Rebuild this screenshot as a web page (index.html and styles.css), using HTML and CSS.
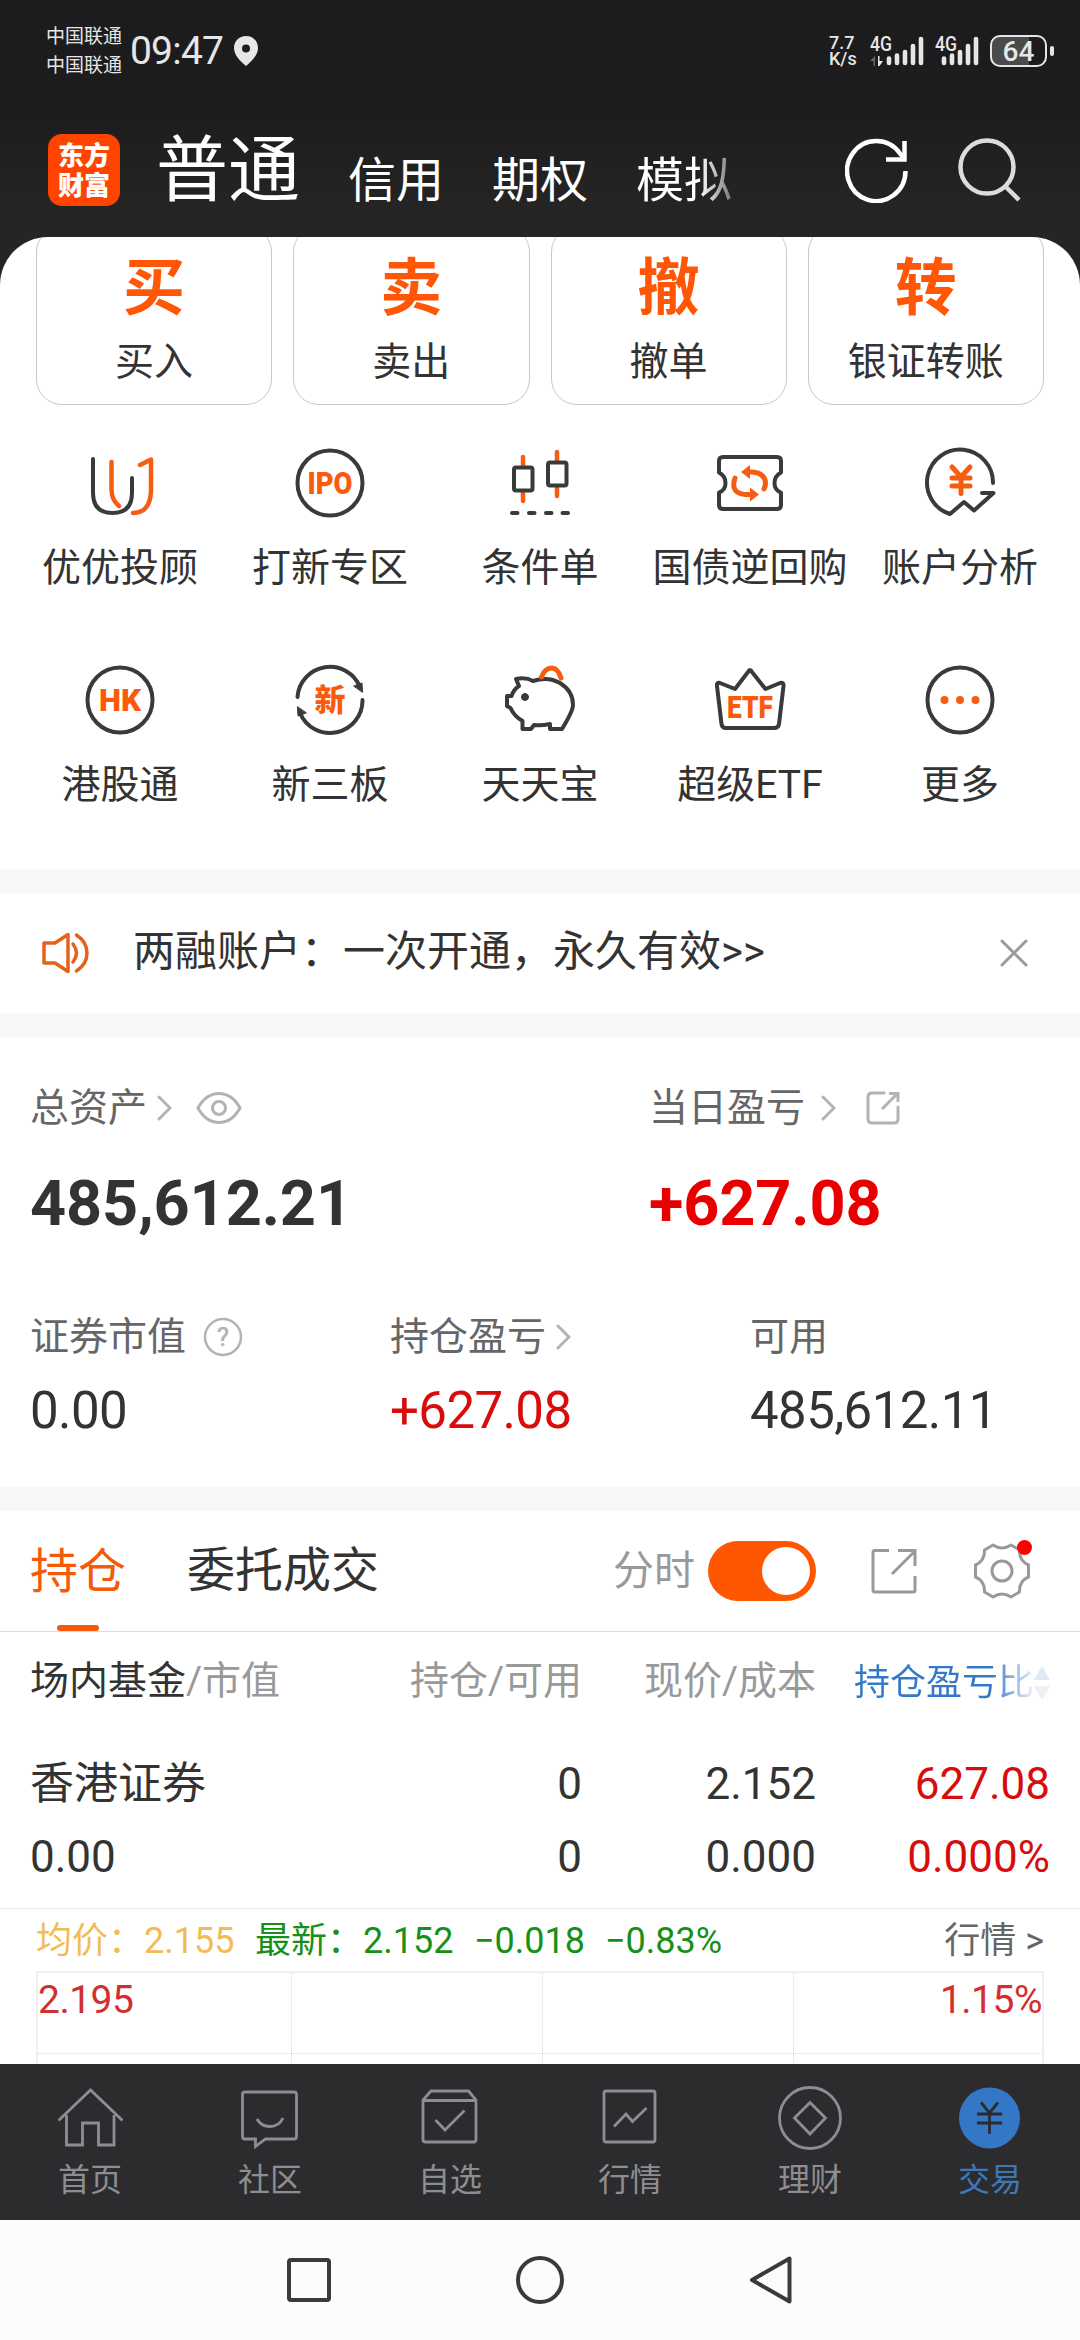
FILE: index.html
```html
<!DOCTYPE html>
<html lang="zh-CN">
<head>
  <meta charset="utf-8">
  <title>交易</title>
  <link rel="stylesheet" href="styles.css">
</head>
<body>
  <header class="header">
    <div class="status-bar">
      <div class="carriers">
        <span>中国联通</span>
        <span>中国联通</span>
      </div>
      <span class="time">09:47</span>
      <svg class="location" width="24" height="30" viewBox="0 0 24 30"><path fill="#e6e6e6" fill-rule="evenodd" d="M12 0C5 0 0 5 0 12C0 19 6 25 12 30C18 25 24 19 24 12C24 5 19 0 12 0ZM12 8.500A4 4 0 1 1 12 16.500A4 4 0 1 1 12 8.500Z"/></svg>
      <div class="net-speed">
        <span>7.7</span>
        <span>K/s</span>
      </div>
      <svg class="signal" width="54" height="46" viewBox="0 -8 54 46">
        <text class="signal-text" x="0" y="15" textLength="22" lengthAdjust="spacingAndGlyphs">4G</text>
        <path d="M0 25L5 20V30H3.500V25Z" fill="#666"/>
        <path d="M8 20V30H9.500L13 25H9.500V20Z" fill="#e6e6e6"/>
        <path class="bars" d="M19 22.500V27M27 19.500V27M35 16V27M43 10V27M51 3V27"/>
      </svg>
      <svg class="signal" width="46" height="46" viewBox="0 -8 46 46">
        <text class="signal-text" x="0" y="15" textLength="22" lengthAdjust="spacingAndGlyphs">4G</text>
        <path class="bars" d="M9 22.500V27M17 19.500V27M25 16V27M33 10V27M41 3V27"/>
      </svg>
      <div class="battery"><span>64</span></div>
      <i class="battery-tip"></i>
    </div>
    <div class="top-bar">
      <div class="logo"><span>东方</span><span>财富</span></div>
      <nav class="top-tabs">
        <span class="top-tab active">普通</span>
        <span class="top-tab">信用</span>
        <span class="top-tab">期权</span>
        <span class="top-tab fade">模拟</span>
      </nav>
      <svg width="64" height="66" viewBox="0 0 64 66" fill="none" stroke="#fff" stroke-width="4.500">
        <path d="M60.500 34A29.200 30 0 1 1 55 16.500L60 22"/>
        <path d="M41 22.500H59.500V4"/>
      </svg>
      <svg class="search" width="64" height="66" viewBox="0 0 64 66" fill="none" stroke="#dcdcdc" stroke-width="4.500">
        <circle cx="29" cy="30" r="26.500"/>
        <path d="M47 49L61 63"/>
      </svg>
    </div>
  </header>

  <main class="sheet">
    <section class="cards">
      <div class="card"><b>买</b><span>买入</span></div>
      <div class="card"><b>卖</b><span>卖出</span></div>
      <div class="card"><b>撤</b><span>撤单</span></div>
      <div class="card"><b>转</b><span>银证转账</span></div>
    </section>

    <section class="menu">
      <div class="menu-item">
        <svg class="icon" viewBox="0 0 72 72">
          <path d="M9 12V46Q9 66 28.500 66T48 46V31"/>
          <path class="orange" d="M27.500 15V42Q27.500 53 35 59M56 18L67 12.500V44Q66 66 49 66"/>
        </svg>
        <span>优优投顾</span>
      </div>
      <div class="menu-item">
        <svg class="icon" viewBox="0 0 72 72">
          <circle cx="36" cy="36" r="32.500"/>
          <text x="36" y="47" textLength="45" lengthAdjust="spacingAndGlyphs">IPO</text>
        </svg>
        <span>打新专区</span>
      </div>
      <div class="menu-item">
        <svg class="icon" viewBox="0 0 72 72">
          <path class="orange" d="M19 10V19M19 45V54M53 5V14M53 41V49"/>
          <rect x="10" y="20.500" width="18.500" height="23" rx="2"/>
          <rect x="44" y="15.500" width="18.500" height="23" rx="2"/>
          <path d="M8 66H13.500M25 66H30.500M42 66H47.500M58.500 66H64"/>
        </svg>
        <span>条件单</span>
      </div>
      <div class="menu-item">
        <svg class="icon" viewBox="0 0 72 72">
          <path d="M9 10H63Q67 10 67 14V25.500Q60.500 29 60.500 36T67 45.500V58Q67 62 63 62H9Q5 62 5 58V45.500Q11.500 43 11.500 36T5 25.500V14Q5 10 9 10Z"/>
          <path class="orange thick" d="M33 25H38Q51 26 51.500 36Q51.500 39 50 42M21 31Q16 46 31 47.500H38"/>
          <path class="orange-fill" d="M27 25L36 18V32ZM45 47.500L36 40.500V54.500Z"/>
        </svg>
        <span>国债逆回购</span>
      </div>
      <div class="menu-item">
        <svg class="icon" viewBox="0 0 72 72">
          <path d="M69 36A33 33 0 1 0 26 67L40 55L50 63.500L69.500 46H58"/>
          <path class="orange thick" d="M28 20L37 30L46 20M37 30V46.500M28 31H46M28 39H46"/>
        </svg>
        <span>账户分析</span>
      </div>
      <div class="menu-item">
        <svg class="icon" viewBox="0 0 72 72">
          <circle cx="36" cy="36" r="32.500"/>
          <text x="36" y="47" textLength="42" lengthAdjust="spacingAndGlyphs">HK</text>
        </svg>
        <span>港股通</span>
      </div>
      <div class="menu-item">
        <svg class="icon" viewBox="0 0 72 72">
          <path d="M3.500 33A32.500 32.500 0 0 1 66 23M68.500 36A32.500 32.500 0 0 1 6 49"/>
          <path class="dark-fill" d="M60 22L68 19L68.500 28ZM12 49L4 52L3.500 43Z"/>
          <text class="cjk" x="36" y="47">新</text>
        </svg>
        <span>新三板</span>
      </div>
      <div class="menu-item">
        <svg class="icon" viewBox="0 0 72 72">
          <path d="M12 15Q22 13 29 17Q44 12 56 19Q69 27 69 41Q69 47 58 65H46V60Q37 62 30 61L27 65H18.500V57Q10 52 6.500 44L3 42V32H7.500Q10 25 15 22Z"/>
          <path class="orange thick" d="M37.500 13Q41 4 47.500 4T57 14"/>
          <circle class="dark-fill" cx="21" cy="33" r="3.500"/>
        </svg>
        <span>天天宝</span>
      </div>
      <div class="menu-item">
        <svg class="icon" viewBox="0 0 72 72">
          <path d="M34 8Q36 4 38 8L51.500 25L66 19Q70 18 69.500 22L65 60Q64.500 64 60 64H12Q8 64 7.500 60L3 22Q2.500 18 6 19L21 25Z"/>
          <text x="36" y="53.500" textLength="46" lengthAdjust="spacingAndGlyphs">ETF</text>
        </svg>
        <span>超级ETF</span>
      </div>
      <div class="menu-item">
        <svg class="icon" viewBox="0 0 72 72">
          <circle cx="36" cy="36" r="32.500"/>
          <g class="orange-fill"><circle cx="20.500" cy="36" r="4"/><circle cx="36" cy="36" r="4"/><circle cx="51.500" cy="36" r="4"/></g>
        </svg>
        <span>更多</span>
      </div>
    </section>

    <section class="notice">
      <svg width="48" height="42" viewBox="0 0 48 42" fill="none" stroke="#e5621b" stroke-width="3.500" stroke-linejoin="round" stroke-linecap="round">
        <path d="M2 11H13L26 2.500V39.500L13 31H2Z"/>
        <path d="M31 12Q38 21 31 30M34.500 3Q45 10 45 21T34.500 39"/>
      </svg>
      <span class="notice-text">两融账户：一次开通，永久有效&gt;&gt;</span>
      <svg width="28" height="28" viewBox="0 0 28 28" stroke="#999" stroke-width="3" stroke-linecap="round"><path d="M2 2L26 26M26 2L2 26"/></svg>
    </section>

    <section class="assets">
      <div class="assets-main">
        <div>
          <div class="label">总资产
            <svg class="chevron near" viewBox="0 0 15 26"><path d="M2 2L13 13L2 24"/></svg>
            <svg class="eye" width="46" height="32" viewBox="0 0 46 32" fill="none" stroke="#b3b3b3" stroke-width="3"><path d="M2 16Q10 1.500 23 1.500T44 16Q36 30.500 23 30.500T2 16Z"/><circle cx="23" cy="16" r="6.500"/></svg>
          </div>
          <div class="total">485,612.21</div>
        </div>
        <div>
          <div class="label">当日盈亏
            <svg class="chevron far" viewBox="0 0 15 26"><path d="M2 2L13 13L2 24"/></svg>
            <svg class="share" width="34" height="34" viewBox="0 0 34 34" fill="none" stroke="#b3b3b3" stroke-width="3"><path d="M18 2H6Q2 2 2 6V28Q2 32 6 32H28Q32 32 32 28V16" stroke-linecap="round"/><path d="M16 18L31 3M23 2.500H32V11"/></svg>
          </div>
          <div class="total red">+627.08</div>
        </div>
      </div>
      <div class="assets-sub">
        <div>
          <div class="label">证券市值
            <svg class="help" width="40" height="40" viewBox="0 0 40 40"><circle cx="20" cy="20" r="18" fill="none" stroke="#b3b3b3" stroke-width="2.500"/><text x="20" y="29" text-anchor="middle" font-size="25" fill="#b3b3b3" stroke="#b3b3b3" stroke-width=".6">?</text></svg>
          </div>
          <div class="value">0.00</div>
        </div>
        <div>
          <div class="label">持仓盈亏
            <svg class="chevron near" viewBox="0 0 15 26"><path d="M2 2L13 13L2 24"/></svg>
          </div>
          <div class="value red">+627.08</div>
        </div>
        <div>
          <div class="label">可用</div>
          <div class="value">485,612.11</div>
        </div>
      </div>
    </section>

    <section class="position-tabs">
      <span class="position-tab active">持仓</span>
      <span class="position-tab">委托成交</span>
      <span class="switch-label">分时</span>
      <div class="switch"></div>
      <svg class="share-big" width="46" height="46" viewBox="0 0 46 46" fill="none" stroke="#999" stroke-width="3"><path d="M18 2.500H4Q2 2.500 2 4.500V42Q2 44 4 44H42Q44 44 44 42V28"/><path d="M21 26L43 4M27 2.500H44V18"/></svg>
      <div class="gear">
        <svg width="56" height="56" viewBox="0 0 56 56" fill="none" stroke="#999" stroke-width="3" stroke-linejoin="round"><path d="M19 2Q28 8 37 2L45.500 7Q45 18 54.500 22V34Q45 38 45.500 49L37 54Q28 48 19 54L10.500 49Q11 38 1.500 34V22Q11 18 10.500 7Z"/><circle cx="28" cy="28" r="10"/></svg>
        <i class="dot"></i>
      </div>
    </section>

    <section class="holdings">
      <div class="row head">
        <span><em>场内基金</em>/市值</span>
        <span>持仓/可用</span>
        <span>现价/成本</span>
        <span class="sort">持仓盈亏比
          <svg width="16" height="34" viewBox="0 0 16 34"><path fill="#e1eaf4" d="M8 0L16 14H0Z"/><path fill="#f0f0f0" d="M8 34L0 20H16Z"/></svg>
        </span>
      </div>
      <div class="row">
        <span>香港证券</span><span>0</span><span>2.152</span><span class="red">627.08</span>
      </div>
      <div class="row second">
        <span>0.00</span><span>0</span><span>0.000</span><span class="red">0.000%</span>
      </div>
    </section>

    <section class="quote">
      <div class="quote-line">
        <span class="avg">均价：</span><span class="avg num">2.155</span>
        <span class="last">最新：</span><span class="last num">2.152</span>
        <span class="last change">−0.018</span><span class="last change">−0.83%</span>
        <span class="more">行情 &gt;</span>
      </div>
      <div class="chart">
        <div class="chart-top">
          <span>2.195</span><i></i><i></i><span>1.15%</span>
        </div>
        <div class="chart-next"><i></i><i></i><i></i><i></i></div>
      </div>
    </section>
  </main>

  <nav class="tab-bar">
    <div class="tab">
      <svg viewBox="0 0 66 66"><path d="M1.500 35.500L33.500 5L65.500 35.500M9.500 30V60H25.500V38H41.500V60H57V30"/></svg>
      <span>首页</span>
    </div>
    <div class="tab">
      <svg viewBox="0 0 66 66"><path d="M8 7H57Q59.500 7 59.500 9.500V51.500Q59.500 54 57 54H28.500L18.500 61.500V54H8Q5.500 54 5.500 51.500V9.500Q5.500 7 8 7ZM20 34Q24 41.500 33 41.500T46 33"/></svg>
      <span>社区</span>
    </div>
    <div class="tab">
      <svg viewBox="0 0 66 66"><path d="M6 15L14 6H51.500L59 15V54.500Q59 57 56.500 57H8.500Q6 57 6 54.500ZM6 15.500H59M18.500 35L28 45L47.500 25.500"/></svg>
      <span>自选</span>
    </div>
    <div class="tab">
      <svg viewBox="0 0 66 66"><rect x="7" y="6" width="51" height="51" rx="2"/><path d="M17 41.500L29 29L35.500 36.500L49.500 23"/></svg>
      <span>行情</span>
    </div>
    <div class="tab">
      <svg viewBox="0 0 66 66"><circle cx="33" cy="33" r="30.500"/><path d="M33 17.500L48.500 33L33 49L17.500 33Z"/></svg>
      <span>理财</span>
    </div>
    <div class="tab active">
      <svg viewBox="0 0 66 66"><circle class="coin" cx="32.500" cy="33" r="30.500"/><path class="yen" d="M24 17.500L32.500 28L41 17.500M32.500 28V49M20 29H45M20 38H45"/></svg>
      <span>交易</span>
    </div>
  </nav>

  <footer class="system-nav">
    <svg width="48" height="48" viewBox="0 0 48 48"><rect x="4" y="4" width="40" height="40" rx="2"/></svg>
    <svg width="48" height="48" viewBox="0 0 48 48"><circle cx="24" cy="24" r="22"/></svg>
    <svg width="48" height="48" viewBox="0 0 48 48"><path d="M42.500 2.500V45.500L5 24Z"/></svg>
  </footer>
</body>
</html>
```

FILE: styles.css
```css
* {
  box-sizing: border-box;
}
body {
  margin: 0;
  width: 1080px;
  height: 2340px;
  overflow: hidden;
  display: flex;
  flex-direction: column;
  background-color: #252525;
  color: #333;
  font-family: Roboto, "Noto Sans CJK SC", sans-serif;
}
svg {
  display: block;
  flex: none;
}
span {
  white-space: nowrap;
}
.red {
  color: #d80c0c;
}

/* Header */
.header {
  height: 237px;
  flex: none;
  background: linear-gradient(#1c1c1e 45%, #252525 90%);
  color: #fff;
}
.status-bar {
  height: 102px;
  display: flex;
  align-items: center;
  padding-left: 46px;
  color: #e6e6e6;
}
.carriers {
  display: flex;
  flex-direction: column;
  width: 84px;
  font-size: 19px;
  line-height: 29px;
}
.time {
  width: 104px;
  font-size: 39px;
  line-height: 46px;
  letter-spacing: -.800px;
}
.net-speed {
  display: flex;
  flex-direction: column;
  margin-left: 571px;
  width: 41px;
  font-size: 18px;
  font-weight: 500;
  line-height: 16px;
}
.signal {
  margin-right: 11px;
}
.signal + .signal {
  margin-right: 9px;
}
.signal-text {
  font-size: 20px;
  font-weight: 500;
  fill: #e6e6e6;
}
.bars {
  stroke: #e6e6e6;
  stroke-width: 4.600px;
  stroke-linecap: round;
}
.battery {
  width: 57px;
  height: 32px;
  border: 2px solid #e6e6e6;
  border-radius: 10px;
  background: linear-gradient(to right, #4a4a4b 70%, transparent 70%);
  text-align: center;
  font-size: 28px;
  font-weight: 500;
  line-height: 29px;
}
.battery-tip {
  width: 4px;
  height: 10px;
  margin-left: 3px;
  border-radius: 2px;
  background-color: #e6e6e6;
}
.top-bar {
  height: 135px;
  display: flex;
  align-items: center;
  padding-left: 48px;
}
.logo {
  width: 72px;
  height: 72px;
  border-radius: 14px;
  background-color: #ff4400;
  display: flex;
  flex-direction: column;
  align-items: center;
  justify-content: center;
  font-family: "Noto Sans CJK SC", sans-serif;
  font-size: 26px;
  font-weight: 900;
  line-height: 30px;
  padding-bottom: 2px;
}
.top-tabs {
  width: 725px;
  padding-left: 36px;
  display: flex;
  align-items: baseline;
  gap: 48px;
  font-size: 48px;
}
.top-tab {
  padding-top: 3px;
  transform: translateY(3px);
}
.top-tab.active {
  padding-top: 0;
  font-size: 72px;
  line-height: 100px;
  transform: translateY(1px);
}
.top-tab.fade {
  background: linear-gradient(to right, #fff 66%, #777);
  -webkit-background-clip: text;
  background-clip: text;
  color: transparent;
}
.search {
  margin-left: 49px;
}

/* White sheet */
.sheet {
  height: 1827px;
  flex: none;
  overflow: hidden;
  background-color: #fff;
  border-radius: 48px 48px 0 0;
}
.cards {
  display: grid;
  grid-template-columns: repeat(4, 1fr);
  gap: 21px;
  margin-top: -11px;
  padding: 0 36px;
}
.card {
  height: 179px;
  border: 1px solid #c8c8c8;
  border-radius: 26px;
  display: flex;
  flex-direction: column;
  align-items: center;
  padding-top: 22px;
  font-size: 39px;
  line-height: 46px;
}
.card b {
  margin-bottom: 10px;
  font-size: 62px;
  line-height: 80px;
  color: #ff5705;
}
.menu {
  display: grid;
  grid-template-columns: repeat(5, 210px);
  grid-auto-rows: 217px;
  justify-content: center;
  height: 464px;
  padding-top: 42px;
}
.menu-item {
  display: flex;
  flex-direction: column;
  align-items: center;
  font-size: 39px;
  line-height: 46px;
}
.icon {
  width: 72px;
  height: 72px;
  margin-bottom: 26px;
  fill: none;
  stroke: #3a3a3a;
  stroke-width: 4px;
  stroke-linecap: round;
  stroke-linejoin: round;
}
.icon .orange {
  stroke: #f55d12;
  stroke-width: 4.500px;
}
.icon .thick {
  stroke-width: 5px;
}
.icon .orange-fill {
  fill: #f55d12;
  stroke: none;
}
.icon .dark-fill {
  fill: #3a3a3a;
  stroke-width: 1px;
}
.icon text {
  fill: #fb5a0c;
  stroke: none;
  font-size: 32px;
  font-weight: 900;
  text-anchor: middle;
}
.icon .cjk {
  font-size: 31px;
}

/* Notice */
.notice {
  height: 168px;
  border: solid #f7f7fa;
  border-width: 24px 0;
  display: flex;
  align-items: center;
  padding: 0 52px 0 42px;
  font-size: 42px;
  line-height: 50px;
}
.notice-text {
  flex: 1;
  padding: 0 0 2px 43px;
}

/* Assets */
.assets {
  height: 474px;
  padding: 47px 0 0 30px;
  border-bottom: 24px solid #f7f7fa;
}
.assets-main {
  display: grid;
  grid-template-columns: 619px 1fr;
}
.assets-sub {
  display: grid;
  grid-template-columns: repeat(3, 360px);
  margin-top: 74px;
}
.label {
  display: flex;
  align-items: center;
  height: 48px;
  font-size: 39px;
  line-height: 48px;
  color: #666;
}
.chevron {
  width: 15px;
  height: 26px;
  fill: none;
  stroke: #b3b3b3;
  stroke-width: 3px;
  stroke-linecap: round;
}
.chevron.near {
  margin-left: 10px;
}
.chevron.far {
  margin-left: 16px;
}
.eye {
  margin-left: 24px;
}
.share {
  margin-left: 30px;
}
.help {
  margin-left: 17px;
}
.total {
  margin-top: 37px;
  height: 70px;
  font-size: 63px;
  font-weight: 700;
  line-height: 70px;
  letter-spacing: -.100px;
}
.total.red {
  color: #e80000;
}
.value {
  margin-top: 20px;
  font-size: 51px;
  line-height: 60px;
  letter-spacing: -.600px;
}

/* Position tabs */
.position-tabs {
  height: 121px;
  border-bottom: 1px solid #dcdcdc;
  display: flex;
  align-items: center;
  padding-left: 30px;
  font-size: 48px;
  line-height: 122px;
}
.position-tab {
  margin-right: 61px;
}
.position-tab.active {
  color: #f5590a;
  height: 120px;
  display: flex;
  flex-direction: column;
  align-items: center;
}
.position-tab.active::after {
  content: "";
  width: 42px;
  height: 6px;
  margin-top: -8px;
  flex: none;
  border-radius: 3px;
  background-color: #f5590a;
}
.switch-label {
  margin-left: auto;
  font-size: 41px;
  color: #999;
}
.switch {
  width: 108px;
  height: 60px;
  margin-left: 13px;
  padding: 6px;
  border-radius: 30px;
  background-color: #ff5700;
}
.switch::after {
  content: "";
  display: block;
  width: 48px;
  height: 48px;
  margin-left: auto;
  border-radius: 50%;
  background-color: #fff;
}
.share-big {
  margin-left: 55px;
}
.gear {
  position: relative;
  margin: 0 50px 0 57px;
}
.dot {
  position: absolute;
  top: -3px;
  right: -2px;
  width: 15px;
  height: 15px;
  border-radius: 50%;
  background-color: #f00;
}

/* Holdings */
.holdings {
  height: 277px;
  border-bottom: 1px solid #e8e8e8;
}
.row {
  display: grid;
  grid-template-columns: 300px 252px 234px 234px;
  padding-left: 30px;
  height: 73px;
  font-size: 44px;
  line-height: 74px;
  text-align: right;
}
.row span:first-child {
  text-align: left;
}
.row.head {
  height: 115px;
  font-size: 39px;
  line-height: 99px;
  color: #999;
}
.row em {
  font-style: normal;
  color: #333;
}
.sort {
  display: flex;
  align-items: center;
  justify-content: flex-end;
  height: 102px;
  font-size: 36px;
  background: linear-gradient(to right, #3478c8 75%, #e8f0fa 93%);
  -webkit-background-clip: text;
  background-clip: text;
  color: transparent;
}

/* Quote and minute chart */
.quote {
  padding: 0 36px;
}
.quote-line {
  display: flex;
  height: 62px;
  font-size: 36px;
  line-height: 64px;
}
.avg {
  color: #f0bd55;
}
.last {
  color: #169016;
}
.num {
  width: 111px;
}
.change {
  width: 131px;
}
.more {
  margin-left: auto;
  color: #666;
}
.chart {
  height: 200px;
  border: 2px solid #f0f0f0;
}
.chart-top,
.chart-next {
  display: grid;
  grid-template-columns: 254px 251px 251px 1fr;
  height: 81px;
  border-bottom: 1px dotted #ddd;
}
.chart-top > *,
.chart-next > * {
  border-right: 1px dotted #ddd;
}
.chart-top > :last-child,
.chart-next > :last-child {
  border-right: none;
  text-align: right;
}
.chart-top span {
  font-size: 39px;
  line-height: 54px;
  letter-spacing: -.500px;
  color: #d32f2f;
}

/* Bottom navigation */
.tab-bar {
  height: 156px;
  flex: none;
  display: grid;
  grid-template-columns: repeat(6, 1fr);
  background-color: #2c2c2e;
  color: #8e8e92;
}
.tab {
  display: flex;
  flex-direction: column;
  align-items: center;
  padding-top: 21px;
  font-size: 32px;
  line-height: 40px;
}
.tab svg {
  width: 66px;
  height: 66px;
  margin-bottom: 9px;
  fill: none;
  stroke: #8e8e92;
  stroke-width: 2.800px;
}
.tab.active {
  color: #3f78b8;
}
.tab .coin {
  fill: #3377c6;
  stroke: none;
}
.tab .yen {
  stroke: #2c2c2e;
}
.system-nav {
  height: 120px;
  flex: none;
  display: flex;
  align-items: center;
  justify-content: center;
  gap: 183px;
  background-color: #fcfcfc;
}
.system-nav svg {
  fill: none;
  stroke: #3a3a3a;
  stroke-width: 4px;
  stroke-linejoin: round;
}
```
